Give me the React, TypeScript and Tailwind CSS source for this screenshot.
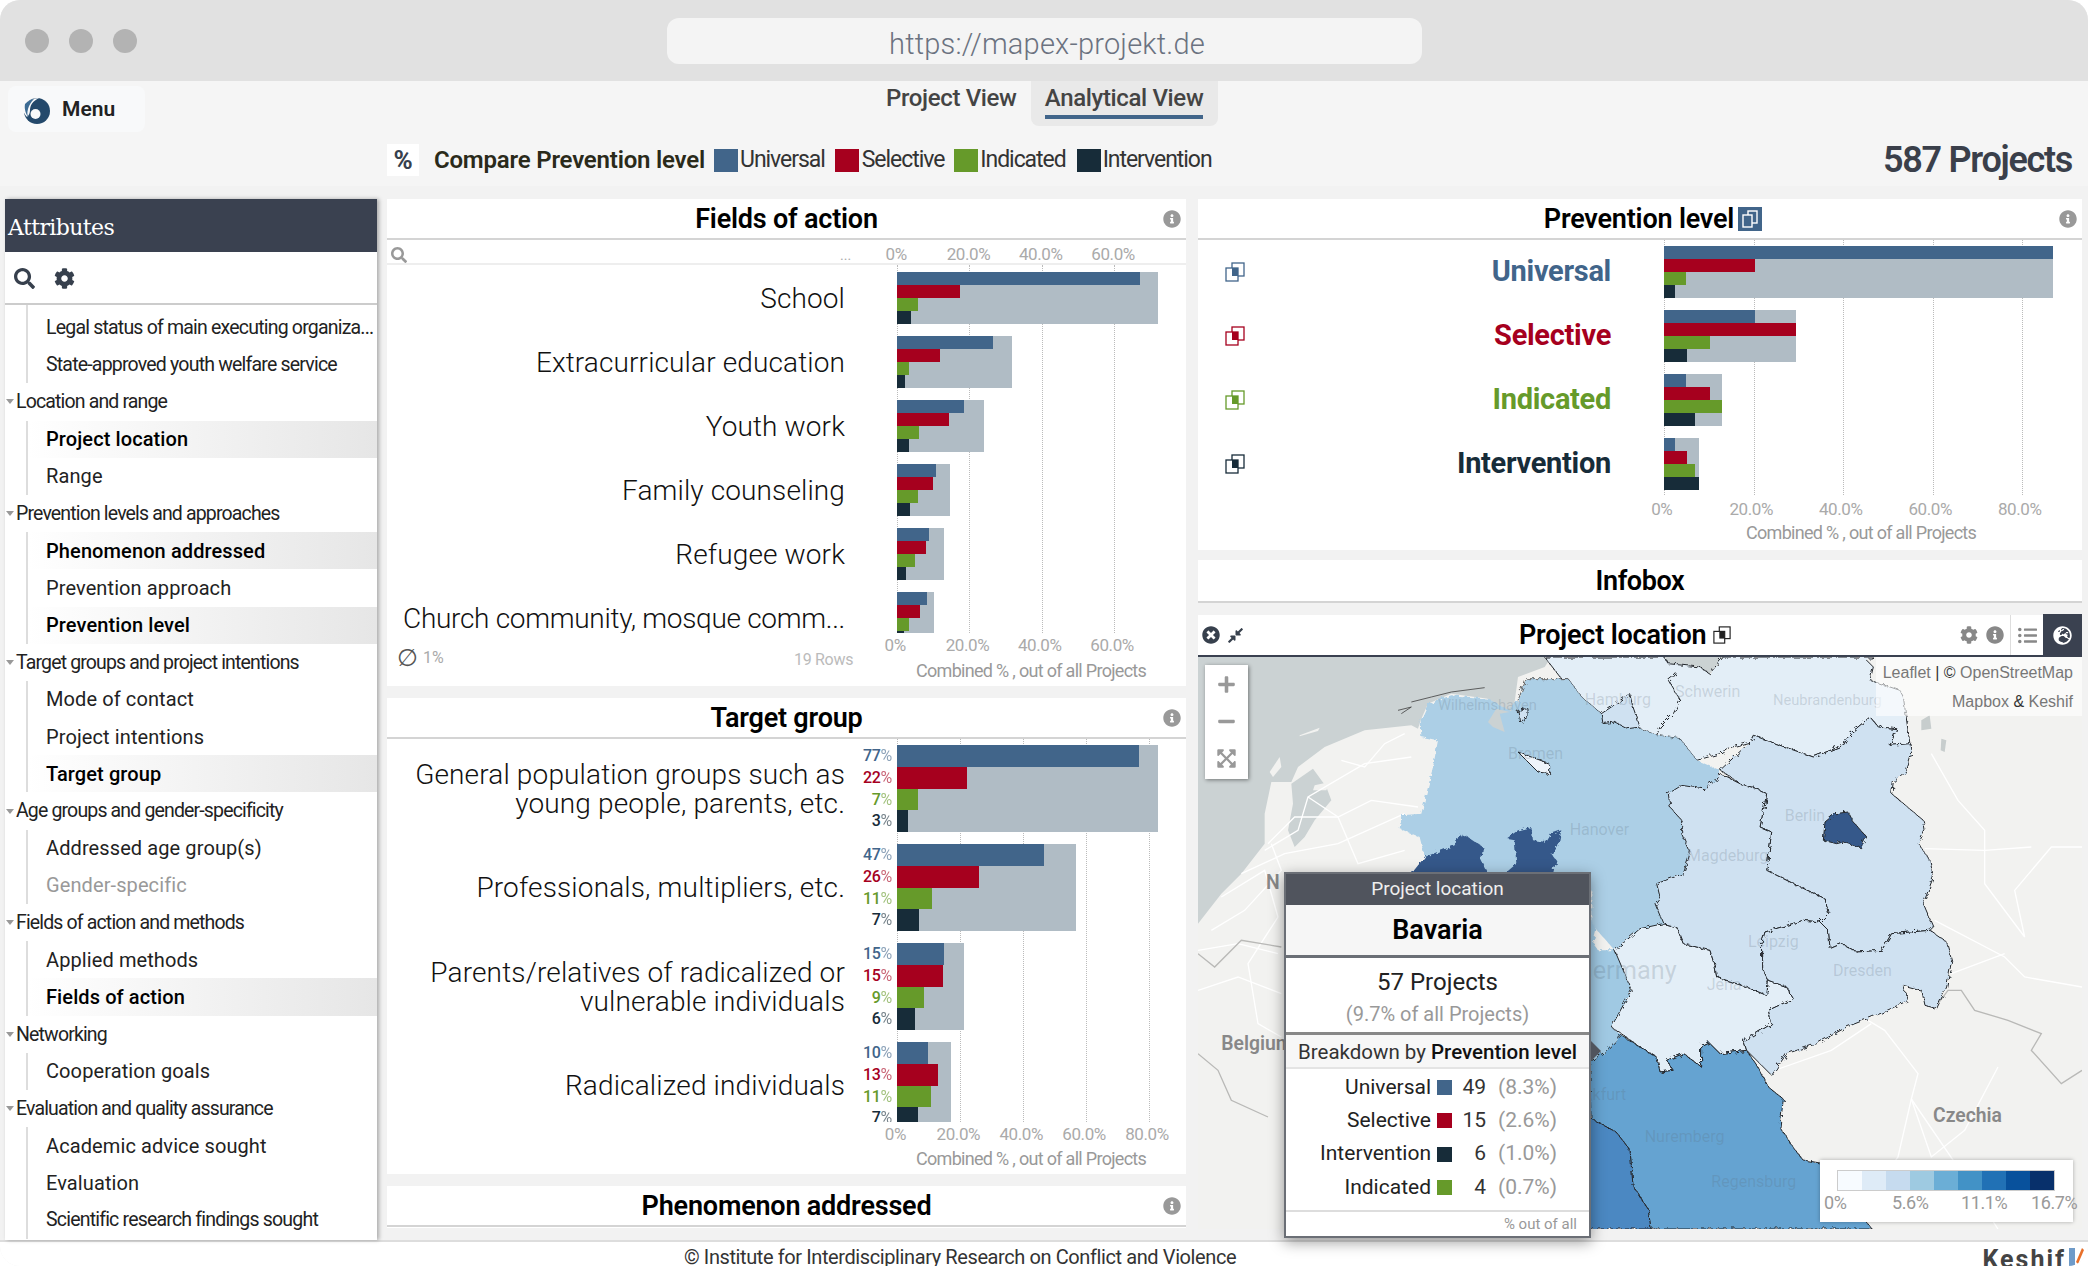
import type { ReactNode } from 'react'
import {
  FaCog,
  FaCompressAlt,
  FaExpandArrowsAlt,
  FaGlobeEurope,
  FaInfoCircle,
  FaListUl,
  FaMinus,
  FaPlus,
  FaSearch,
  FaTimesCircle,
} from 'react-icons/fa'

const BLUE = '#41658a'
const RED = '#a6001e'
const GREEN = '#669a2a'
const DARK = '#172c39'
const COLORS = [BLUE, RED, GREEN, DARK]

type Row = { label: ReactNode; total: number; bars: number[]; pct?: string[] }

const fieldRows: Row[] = [
  { label: 'School', total: 261, bars: [243, 63, 21, 14] },
  { label: 'Extracurricular education', total: 115, bars: [96, 43, 12, 8] },
  { label: 'Youth work', total: 87, bars: [67, 52, 22, 12] },
  { label: 'Family counseling', total: 53, bars: [39, 36, 21, 13] },
  { label: 'Refugee work', total: 47, bars: [32, 29, 18, 9] },
  { label: <span className="tracking-[-0.3px]">Church community, mosque comm...</span>, total: 37, bars: [30, 23, 12, 7] },
]

const targetRows: Row[] = [
  {
    label: <>General population groups such as<br />young people, parents, etc.</>,
    total: 261,
    bars: [242, 70, 21, 11],
    pct: ['77', '22', '7', '3'],
  },
  { label: 'Professionals, multipliers, etc.', total: 179, bars: [147, 82, 35, 22], pct: ['47', '26', '11', '7'] },
  {
    label: <>Parents/relatives of radicalized or<br />vulnerable individuals</>,
    total: 67,
    bars: [47, 46, 27, 18],
    pct: ['15', '15', '9', '6'],
  },
  { label: 'Radicalized individuals', total: 54, bars: [31, 41, 34, 21], pct: ['10', '13', '11', '7'] },
]

const levelRows = [
  { label: 'Universal', color: BLUE, total: 389, bars: [389, 91, 22, 11] },
  { label: 'Selective', color: RED, total: 132, bars: [91, 132, 46, 23] },
  { label: 'Indicated', color: GREEN, total: 58, bars: [22, 46, 58, 31] },
  { label: 'Intervention', color: DARK, total: 35, bars: [11, 23, 31, 35] },
]

type Item = { name: string; on?: boolean; off?: boolean; narrow?: boolean }

const sidebar: { group?: string; items: Item[] }[] = [
  {
    items: [
      { name: 'Legal status of main executing organiza...', narrow: true },
      { name: 'State-approved youth welfare service', narrow: true },
    ],
  },
  { group: 'Location and range', items: [{ name: 'Project location', on: true }, { name: 'Range' }] },
  {
    group: 'Prevention levels and approaches',
    items: [{ name: 'Phenomenon addressed', on: true }, { name: 'Prevention approach' }, { name: 'Prevention level', on: true }],
  },
  {
    group: 'Target groups and project intentions',
    items: [{ name: 'Mode of contact' }, { name: 'Project intentions' }, { name: 'Target group', on: true }],
  },
  { group: 'Age groups and gender-specificity', items: [{ name: 'Addressed age group(s)' }, { name: 'Gender-specific', off: true }] },
  { group: 'Fields of action and methods', items: [{ name: 'Applied methods' }, { name: 'Fields of action', on: true }] },
  { group: 'Networking', items: [{ name: 'Cooperation goals' }] },
  {
    group: 'Evaluation and quality assurance',
    items: [{ name: 'Academic advice sought' }, { name: 'Evaluation' }, { name: 'Scientific research findings sought', narrow: true }],
  },
]

const breakdown = [
  { label: 'Universal', color: BLUE, n: 49, pct: '8.3' },
  { label: 'Selective', color: RED, n: 15, pct: '2.6' },
  { label: 'Intervention', color: DARK, n: 6, pct: '1.0' },
  { label: 'Indicated', color: GREEN, n: 4, pct: '0.7' },
]

const legendColors = ['#f7fbff', '#deebf7', '#c6dbef', '#9ecae1', '#6baed6', '#4292c6', '#2171b5', '#08519c', '#08306b']

function DoubleSquare({ color, fill = 'none', size = 20 }: { color: string; fill?: string; size?: number }) {
  return (
    <svg width={size} height={size} viewBox="0 0 20 20" fill="none">
      <rect x="7" y="1" width="12" height="13" fill="white" stroke={color} strokeWidth="1.3" />
      <rect x="1" y="6" width="12" height="13" fill="white" stroke={color} strokeWidth="1.3" />
      <rect x="7" y="6" width="6" height="8" fill={fill} />
    </svg>
  )
}

function Axis({ ticks, step, left }: { ticks: string[]; step: number; left: number }) {
  return (
    <div className="flex text-[17px] tracking-[-0.4px] text-[#aaa]" style={{ paddingLeft: left }}>
      {ticks.map(t => (
        <span key={t} className="shrink-0 text-center" style={{ width: step }}>{t}</span>
      ))}
    </div>
  )
}

function GridLines({ step, count, start }: { step: number; count: number; start: number }) {
  return (
    <>
      {Array.from({ length: count }).map((_, i) => (
        <div
          key={i}
          className="absolute top-0 bottom-0 border-l border-dotted border-[#bbb]"
          style={{ left: start + i * step }}
        />
      ))}
    </>
  )
}

function Bars({ row, height }: { row: { total: number; bars: number[] }; height: number }) {
  return (
    <div className="relative bg-[#b0bcc5]" style={{ width: row.total }}>
      {row.bars.map((w, i) => (
        <div key={i} style={{ width: w, height, backgroundColor: COLORS[i] }} />
      ))}
    </div>
  )
}

function PanelHeader({ title, children }: { title: string; children?: ReactNode }) {
  return (
    <div className="relative flex h-[41px] shrink-0 items-center justify-center border-b-2 border-[#d4d4d4] bg-white pt-[1px]">
      <span className="text-[27px] font-semibold tracking-[-0.2px] text-black">{title}</span>
      {children}
      <FaInfoCircle className="absolute right-[5px] top-[11px] text-[18px] text-[#999]" />
    </div>
  )
}

function Sidebar() {
  return (
    <aside className="relative z-10 flex w-[372px] shrink-0 flex-col bg-white shadow-[2px_0_4px_rgba(0,0,0,0.3)]">
      <div className="flex h-[53px] items-center bg-[#3a4150] pl-[3px] pt-[3px] font-['DejaVu_Serif',serif] text-[22px] tracking-[-0.6px] text-white">
        Attributes
      </div>
      <div className="flex h-[53px] items-center gap-[19px] border-b-2 border-[#ccc] pl-[9px] pt-[2px] text-[#37404d]">
        <FaSearch className="text-[21px]" />
        <FaCog className="text-[21px]" />
      </div>
      <div className="flex-1 overflow-hidden">
        {sidebar.map((sec, i) => (
          <div key={i}>
            {sec.group && (
              <div className="flex h-[37.2px] items-center text-[19.5px] tracking-[-0.85px] text-[#222]">
                <svg width="11" height="7" viewBox="0 0 11 7">
                  <path d="M1 1h8L5 6z" fill="#999" />
                </svg>
                {sec.group}
              </div>
            )}
            <div className={`ml-[21px] border-l-2 border-[#ddd] ${i === 0 ? 'pt-[4px]' : ''}`}>
              {sec.items.map(item => (
                <div
                  key={item.name}
                  className={`flex h-[37.2px] items-center whitespace-nowrap pl-[18px] ${
                    item.narrow ? 'text-[19.5px] tracking-[-0.8px]' : 'text-[20px] tracking-[0.1px]'
                  } ${item.on ? 'bg-linear-to-r from-white to-[#e6e6e6] font-medium text-black' : item.off ? 'text-[#999]' : 'text-[#222]'}`}
                >
                  {item.name}
                </div>
              ))}
            </div>
          </div>
        ))}
      </div>
    </aside>
  )
}

function FieldsPanel() {
  return (
    <section className="flex h-[487px] shrink-0 flex-col bg-white">
      <PanelHeader title="Fields of action" />
      <div className="flex h-[25px] shrink-0 items-center border-b-2 border-[#eee] pt-[6px] text-[#aaa]">
        <FaSearch className="ml-[4px] text-[16px] text-[#999]" />
        <span className="ml-[433px] w-[20px] text-[14px] leading-none">...</span>
        <Axis ticks={['0%', '20.0%', '40.0%', '60.0%']} step={72.3} left={0} />
      </div>
      <div className="relative h-[368px] shrink-0 overflow-hidden pt-[7px]">
        <GridLines step={72.3} count={4} start={510} />
        {fieldRows.map((row, i) => (
          <div key={i} className="relative mb-[12px] flex h-[52px] items-center">
            <div className="w-[458px] shrink-0 whitespace-nowrap pt-[2px] text-right text-[28px] font-light leading-[28px] tracking-[0.12px] text-[#111]">{row.label}</div>
            <div className="ml-[52px]"><Bars row={row} height={13} /></div>
          </div>
        ))}
      </div>
      <div className="relative flex-1">
        <div className="pl-[472px]"><Axis ticks={['0%', '20.0%', '40.0%', '60.0%']} step={72.3} left={0} /></div>
        <div className="pl-[529px] text-[18px] leading-[24px] tracking-[-0.7px] text-[#999]">Combined % , out of all Projects</div>
        <div className="absolute left-[10px] top-[13px] flex items-center gap-[5px] text-[16px] text-[#aaa]">
          <span className="font-['DejaVu_Sans',sans-serif] text-[24px] leading-none text-[#555]">∅</span>1%
        </div>
        <div className="absolute left-[407px] top-[15px] text-[16px] tracking-[-0.3px] text-[#bbb]">19 Rows</div>
      </div>
    </section>
  )
}

function TargetPanel() {
  return (
    <section className="flex h-[476px] shrink-0 flex-col bg-white">
      <PanelHeader title="Target group" />
      <div className="relative h-[383px] shrink-0 overflow-hidden pt-[6px]">
        <GridLines step={62.9} count={5} start={510} />
        {targetRows.map((row, i) => (
          <div key={i} className="relative mb-[12px] flex h-[87px] items-center">
            <div className="w-[458px] shrink-0 text-right text-[28px] font-light leading-[29px] tracking-[0.15px] text-[#111]">{row.label}</div>
            <div className="ml-[7px] w-[40px] shrink-0 text-right text-[16px] leading-[21.75px] tracking-[-0.3px]">
              {(row.pct ?? []).map((p, j) => (
                <div key={j} className="font-medium" style={{ color: COLORS[j] }}>
                  {p}<span className="font-normal opacity-60">%</span>
                </div>
              ))}
            </div>
            <div className="ml-[5px]"><Bars row={row} height={21.75} /></div>
          </div>
        ))}
      </div>
      <div className="pl-[477px]"><Axis ticks={['0%', '20.0%', '40.0%', '60.0%', '80.0%']} step={62.9} left={0} /></div>
      <div className="pl-[529px] text-[18px] leading-[22px] tracking-[-0.7px] text-[#999]">Combined % , out of all Projects</div>
    </section>
  )
}

function LevelPanel() {
  return (
    <section className="flex h-[351px] shrink-0 flex-col bg-white">
      <PanelHeader title="Prevention level">
        <span className="ml-[4px] mr-[-26px] flex h-[24px] w-[24px] items-center justify-center bg-[#41658a]">
          <svg width="16" height="18" viewBox="0 0 16 18" fill="none">
            <rect x="6" y="1" width="9" height="12" stroke="#fff" strokeWidth="1.4" />
            <rect x="1" y="5" width="9" height="12" fill="#41658a" stroke="#fff" strokeWidth="1.4" />
          </svg>
        </span>
      </PanelHeader>
      <div className="relative h-[255px] shrink-0 pt-[6px]">
        <GridLines step={89.5} count={5} start={466} />
        {levelRows.map(row => (
          <div key={row.label} className="relative mb-[12px] flex h-[52px] items-center">
            <div className="ml-[27px] shrink-0"><DoubleSquare color={row.color} fill={row.color} /></div>
            <div
              className="w-[366px] shrink-0 text-right text-[29px] font-bold tracking-[-0.3px]"
              style={{ color: row.color }}
            >
              {row.label}
            </div>
            <div className="ml-[53px]"><Bars row={row} height={13} /></div>
          </div>
        ))}
      </div>
      <div className="pt-[2px]"><Axis ticks={['0%', '20.0%', '40.0%', '60.0%', '80.0%']} step={89.5} left={419} /></div>
      <div className="pl-[548px] text-[18px] leading-[20px] tracking-[-0.7px] text-[#999]">Combined % , out of all Projects</div>
    </section>
  )
}

function MapDrawing() {
  const seaPts = '0,0 1060,0 1040,30 960,60 945,170 870,125 760,110 690,140 668,190 660,215 640,205 500,220 380,270 300,330 280,375 220,375 200,470 200,560 130,650 70,710 0,800'
  return (
    <svg viewBox="0 0 2652 1716" className="absolute inset-0 h-full w-full">
      <defs>
        <filter id="rough" x="-5%" y="-5%" width="110%" height="110%">
          <feTurbulence type="fractalNoise" baseFrequency="0.07" numOctaves="3" seed="4" />
          <feDisplacementMap in="SourceGraphic" scale="18" />
        </filter>
      </defs>
      <rect width="2652" height="1716" fill="#f2f2f0" />
      <polygon points={seaPts} fill="#cbd2d3" />
      <polygon points="280,380 345,335 385,390 400,430 350,490 320,540 290,570 270,520 285,440" fill="#cbd2d3" />
      <polygon points="215,345 245,300 250,330 225,360" fill="#f2f2f0" />
      <polygon points="305,235 365,212 360,222 305,238" fill="#f2f2f0" />
      <polygon points="350,385 395,375 385,400 345,400" fill="#f2f2f0" />
      <polygon points="1400,0 1410,20 1505,30 1535,50 1570,10 1576,0" fill="#cbd2d3" />
      <polygon points="2170,190 2195,175 2200,215 2170,220" fill="#c7cdcd" />
      <polygon points="2230,245 2245,250 2240,285 2228,280" fill="#c7cdcd" />
      <g fill="none" stroke="#fff" strokeWidth="4">
        <polyline points="200,580 300,520 330,420 500,320 640,300" />
        <polyline points="210,560 290,480 420,480 520,430 660,450" />
        <polyline points="130,650 260,590 420,560 620,470" />
        <polyline points="70,720 200,640 240,780 150,920 180,1100 250,1140" />
        <polyline points="0,880 120,860 240,890" />
        <polyline points="430,310 500,330 560,260 620,230" />
        <polyline points="220,560 250,640 140,760 40,820" />
        <polyline points="330,420 420,480 480,620 620,580" />
        <polyline points="0,1000 120,960 250,1010" />
        <polyline points="2200,290 2280,430 2360,520 2360,680 2480,840 2450,700 2560,570 2652,570" />
        <polyline points="2180,575 2360,580 2500,570" />
        <polyline points="2210,790 2420,900 2480,960 2652,990" />
        <polyline points="2260,950 2420,890" />
        <polyline points="1960,1060 2060,1120 2160,1250 2140,1326 2200,1500 2300,1420 2400,1230" />
        <polyline points="1730,1240 1900,1180 2020,1100" />
        <polyline points="2140,1326 2100,1500 1950,1716" />
        <polyline points="2140,1326 2300,1560 2400,1716" />
      </g>
      <g fill="none" stroke="#b9b9b7" strokeWidth="4">
        <polyline points="2220,1040 2250,1000 2290,1000 2330,1060 2430,1090 2530,1130 2500,1180 2590,1280 2652,1240" />
        <polyline points="0,890 50,930 130,850 250,870" />
        <polyline points="0,1190 60,1240 100,1330 210,1380" />
      </g>
      <g filter="url(#rough)" stroke="#23272c" strokeWidth="3" strokeLinejoin="round">
        <polygon
          fill="#e3eef7"
          points="1040,0 1090,65 1110,65 1150,120 1210,170 1300,210 1326,215 1376,235 1446,245 1496,310 1566,290 1586,275 1656,255 1666,235 1746,265 1846,300 1936,265 1956,230 2016,180 2041,210 2096,215 2076,265 2136,262 2116,120 2106,100 2016,70 2026,30 2006,10 2026,0 1576,0 1535,50 1505,30 1410,20 1400,0"
        />
        <polyline fill="none" points="1436,50 1411,70 1446,130 1426,170 1386,210 1376,235" />
        <polygon
          fill="#accfe6"
          stroke="none"
          points="670,240 668,190 690,140 760,115 870,125 935,160 960,130 985,65 1050,65 1110,65 1150,120 1210,170 1300,210 1326,215 1376,235 1446,245 1496,310 1566,340 1556,370 1516,395 1451,385 1411,410 1416,450 1451,490 1451,530 1476,590 1456,650 1376,680 1386,720 1376,740 1396,800 1326,815 1250,880 1180,800 1180,700 850,700 680,650 680,600 665,540 605,515 610,475 670,470 685,410 705,330 720,250"
        />
        <polyline fill="none" points="960,130 985,65 1050,65 1110,65" stroke="#666" />
        <polygon fill="#a0c9e3" stroke="none" points="1175,780 1195,820 1185,860 1200,880 1250,880 1280,950 1300,1000 1240,1110 1270,1135 1220,1185 1175,1215 1100,1215 1100,780" />
        <polygon fill="#cfe1f1" points="1210,170 1240,150 1260,135 1295,110 1305,150 1326,210 1290,215 1250,195 1215,200" />
        <polygon fill="#e3eef7" points="1326,815 1396,800 1436,810 1456,860 1536,880 1551,930 1556,960 1646,990 1706,1015 1711,970 1766,990 1786,1025 1711,1060 1721,1100 1666,1135 1636,1150 1646,1180 1566,1190 1531,1155 1511,1165 1511,1230 1456,1190 1406,1210 1426,1240 1386,1245 1376,1200 1326,1170 1270,1130 1240,1110 1300,1000 1280,950 1250,880" />
        <polygon fill="#65a3d1" points="1270,1135 1326,1170 1376,1200 1386,1245 1426,1240 1406,1210 1456,1190 1511,1230 1511,1165 1531,1155 1566,1190 1646,1180 1680,1230 1711,1290 1756,1326 1746,1410 1776,1458 1815,1509 1866,1518 2022,1716 1359,1716 1350,1656 1305,1587 1296,1479 1254,1425 1179,1385 1175,1215 1220,1185" />
        <polygon fill="#4c88c2" points="1100,1300 1179,1385 1254,1425 1296,1479 1305,1587 1350,1656 1359,1716 1100,1716" />
        <g transform="translate(1326 0)">
          <polygon fill="#cfe1f1" points="240,340 330,255 340,235 420,265 520,300 610,265 630,230 690,180 715,210 770,215 750,265 810,260 815,290 800,340 760,375 755,410 850,490 855,520 835,560 870,610 880,660 850,740 880,810 870,820 755,830 725,880 650,885 605,860 570,875 565,820 540,795 565,770 555,725 460,680 380,640 385,600 395,525 360,510 380,410 350,395 300,380 250,345" />
          <polygon fill="#cfe1f1" points="240,350 300,380 350,395 380,410 360,510 395,525 385,600 380,640 460,680 555,725 565,770 540,795 490,790 375,825 365,860 365,930 385,970 380,1015 320,990 230,960 225,930 210,880 130,860 110,810 70,800 45,740 60,720 50,680 130,650 150,590 125,530 125,490 90,450 85,410 125,385 190,395 230,370" />
          <polygon fill="#cfe1f1" points="375,825 490,790 540,795 565,820 570,875 605,860 650,885 725,880 755,830 870,820 920,855 935,910 920,990 890,1055 855,1045 845,1000 790,985 805,1030 720,1070 620,1110 530,1160 440,1190 395,1255 360,1220 320,1180 310,1150 340,1135 395,1100 385,1060 460,1025 440,990 385,970 365,930 365,860" />
          <polygon fill="#36598a" points="550,550 555,495 585,470 625,465 640,495 680,540 662,572 610,555 590,560" />
        </g>
        <polygon fill="#eef4fa" points="960,285 1000,300 1055,320 1055,350 1020,345 985,310" />
        <polygon fill="#cfe1f1" points="960,160 990,155 990,180 965,195" />
        <polygon fill="#36598a" stroke="none" points="640,650 680,600 770,565 785,530 810,540 855,570 850,610 870,650" />
        <polygon fill="#36598a" stroke="none" points="920,650 955,620 950,550 925,545 960,520 1000,510 1005,550 1045,555 1060,530 1090,520 1080,570 1060,590 1075,610 1065,650" />
      </g>
      <polygon fill="#cbd2d3" points="870,195 895,155 935,165 905,170 920,225 885,210" />
      <g fill="none" stroke="#444" strokeWidth="2.5">
        <polyline points="600,160 640,150 610,170" />
        <polyline points="640,135 700,120 760,105 860,92" />
      </g>
      <g fontFamily="Roboto, sans-serif" fontWeight="400" fontSize="48" fill="#5b6b7a" fillOpacity="0.22">
        <text x="720" y="158" fontSize="44">Wilhelmshaven</text>
        <text x="1160" y="145">Hamburg</text>
        <text x="1431" y="120">Schwerin</text>
        <text x="1725" y="145" fontSize="44">Neubrandenburg</text>
        <text x="930" y="305">Bremen</text>
        <text x="1115" y="535">Hanover</text>
        <text x="1467" y="612">Magdeburg</text>
        <text x="1760" y="492">Berlin</text>
        <text x="1650" y="870">Leipzig</text>
        <text x="1905" y="958">Dresden</text>
        <text x="1526" y="1000">Jena</text>
        <text x="1436" y="965" fontSize="76" textAnchor="end">Germany</text>
        <text x="1340" y="1455">Nuremberg</text>
        <text x="1540" y="1590">Regensburg</text>
        <text x="1090" y="1330">Frankfurt</text>
      </g>
      <g fontFamily="Roboto, sans-serif" fontWeight="600" fill="#888">
        <text x="204" y="695" fontSize="58">N</text>
        <text x="70" y="1180" fontSize="58">Belgium</text>
        <text x="2205" y="1395" fontSize="58">Czechia</text>
      </g>
    </svg>
  )
}

function MapTooltip() {
  return (
    <div className="absolute left-[86px] top-[215px] z-20 flex h-[366px] w-[307px] flex-col border-2 border-[#6b6f76] bg-white shadow-[0_4px_14px_rgba(0,0,0,0.4)]">
      <div className="flex h-[31px] shrink-0 items-center justify-center bg-[#50545d] text-[19px] text-[#eee]">Project location</div>
      <div className="flex h-[53px] shrink-0 items-center justify-center border-b-[3px] border-[#6b6f76] bg-[#f6f6f6] text-[27px] font-semibold text-black">
        Bavaria
      </div>
      <div className="flex h-[77px] shrink-0 flex-col items-center border-b-[3px] border-[#888] pt-[7px]">
        <div className="text-[24px] leading-[34px] text-[#222]">57 Projects</div>
        <div className="text-[20px] leading-[30px] text-[#999]">(9.7% of all Projects)</div>
      </div>
      <div className="relative flex h-[34px] shrink-0 items-center justify-center border-b-2 border-[#e4e4e4] bg-[#f7f7f7] pt-[2px] text-[20.5px] text-[#333]">
        Breakdown by&nbsp;<span className="font-medium text-[#111]">Prevention level</span>
        <span className="absolute -right-[12px] top-[6px] h-0 w-0 border-y-[10px] border-l-[10px] border-y-transparent border-l-[#50545d]" />
      </div>
      <div className="flex-1 pt-[2px]">
        {breakdown.map(b => (
          <div key={b.label} className="flex h-[33.3px] items-center text-[21px]">
            <span className="w-[145px] shrink-0 text-right text-[#222]">{b.label}</span>
            <span className="ml-[6px] h-[15px] w-[15px] shrink-0" style={{ backgroundColor: b.color }} />
            <span className="w-[34px] shrink-0 text-right text-[#333]">{b.n}</span>
            <span className="w-[71px] shrink-0 text-right text-[#999]">({b.pct}%)</span>
          </div>
        ))}
      </div>
      <div className="flex h-[26px] shrink-0 items-center justify-end border-t-2 border-[#ddd] pr-[12px] text-[15px] text-[#999]">% out of all</div>
    </div>
  )
}

function LocationPanel() {
  return (
    <section className="flex flex-1 flex-col">
      <div className="flex h-[42px] shrink-0 items-center border-b-2 border-[#3a4150] bg-white pl-[4px]">
        <FaTimesCircle className="text-[18px] text-[#37404d]" />
        <FaCompressAlt className="ml-[7px] text-[17px] text-[#37404d]" />
        <span className="ml-[275px] text-[27px] font-semibold tracking-[-0.2px] text-black">Project location</span>
        <span className="ml-[7px]"><DoubleSquare color="#222" fill="#222" size={18} /></span>
        <div className="ml-auto flex h-full items-center text-[#888]">
          <FaCog className="text-[18px]" />
          <FaInfoCircle className="ml-[8px] text-[18px]" />
          <span className="ml-[6px] flex h-full w-[33px] items-center justify-center border-l border-[#ddd] text-[#888]"><FaListUl className="text-[19px]" /></span>
          <span className="flex h-[42px] w-[39px] items-center justify-center bg-[#3a4150] text-white"><FaGlobeEurope className="text-[19px]" /></span>
        </div>
      </div>
      <div className="relative h-[572px] shrink-0">
        <div className="absolute inset-0 overflow-hidden"><MapDrawing /></div>
        <div className="absolute left-[7px] top-[8px] flex h-[114px] w-[43px] flex-col items-center justify-between bg-white py-[10px] text-[#999] shadow-[1px_1px_4px_rgba(0,0,0,0.45)]">
          <FaPlus className="text-[19px]" />
          <FaMinus className="text-[19px]" />
          <FaExpandArrowsAlt className="text-[21px]" />
        </div>
        <div className="absolute right-0 top-0 flex h-[59px] w-[206px] flex-col items-end justify-center bg-white/60 pr-[9px] font-['Liberation_Sans',sans-serif] text-[16px] leading-[29px] text-[#777]">
          <div>Leaflet <span className="text-[#333]">|</span> <span className="text-[#333]">©</span> OpenStreetMap</div>
          <div>Mapbox <span className="text-[#333]">&amp;</span> Keshif</div>
        </div>
        <div className="absolute left-[622px] top-[503px] h-[62px] w-[253px] bg-white pl-[17px] pt-[10px] shadow-[0_0_4px_rgba(0,0,0,0.3)]">
          <div className="flex h-[21px] w-[218px] border border-[#ccc]">
            {legendColors.map(c => (
              <div key={c} className="flex-1" style={{ backgroundColor: c }} />
            ))}
          </div>
          <div className="-ml-[13px] mt-[1px] flex whitespace-nowrap text-[18px] leading-[22px] tracking-[-0.4px] text-[#999]">
            <span className="w-[68px] shrink-0">0%</span>
            <span className="w-[69px] shrink-0">5.6%</span>
            <span className="w-[70px] shrink-0">11.1%</span>
            <span className="shrink-0">16.7%</span>
          </div>
        </div>
        <MapTooltip />
      </div>
    </section>
  )
}

export default function App() {
  return (
    <div className="flex h-screen w-full flex-col overflow-hidden rounded-[20px] bg-[#f2f2f2] font-['Roboto',sans-serif]">
      {/* Browser chrome */}
      <div className="flex h-[81px] shrink-0 items-center bg-[#e1e1e1]">
        <div className="ml-[25px] flex gap-[20px]">
          <span className="h-[24px] w-[24px] rounded-full bg-[#b3b3b3]" />
          <span className="h-[24px] w-[24px] rounded-full bg-[#b3b3b3]" />
          <span className="h-[24px] w-[24px] rounded-full bg-[#b3b3b3]" />
        </div>
        <div className="ml-[530px] flex h-[46px] w-[755px] items-center justify-center rounded-[12px] bg-[#f4f4f4] pl-[5px] pt-[8px] text-[29px] font-light tracking-[0.2px] text-[#6b7280]">
          https://mapex-projekt.de
        </div>
      </div>

      {/* Nav rows */}
      <div className="h-[105px] shrink-0 bg-[#f5f5f5]">
        <div className="flex h-[45px] items-start">
          <div className="ml-[8px] mt-[5px] flex h-[46px] w-[137px] items-center rounded-[8px] bg-[#f8f9fa] pl-[14px] pt-[1px]">
            <svg width="28" height="30" viewBox="0 0 28 30">
              <circle cx="15" cy="16" r="13" fill="#24496b" />
              <path d="M1 13C4 6 11 3 17 3 11 6 8 10 8 15c0 3-1 5-3 7-3-3-4-6-4-9z" fill="#f8f9fa" />
              <path d="M3 9c3-3 6-5 9-5-3 3-5 6-6 10-1 4-1 6 1 9-3-3-5-9-4-14z" fill="#3d6c94" />
              <circle cx="13.5" cy="19" r="5" fill="#f8f9fa" />
            </svg>
            <span className="ml-[12px] text-[21px] font-semibold text-[#222]">Menu</span>
          </div>
          <span className="ml-[741px] text-[24px] font-medium leading-[34px] tracking-[-0.35px] text-[#444]">Project View</span>
          <div className="ml-[14px] flex h-[45px] w-[187px] flex-col items-center rounded-b-[8px] bg-[#e9e9e9]">
            <span className="text-[24px] font-medium leading-[34px] tracking-[-0.35px] text-[#444]">Analytical View</span>
            <span className="h-[4px] w-[158px] bg-[#41658a]" />
          </div>
        </div>
        <div className="mt-[18px] flex h-[32px] items-center pl-[387px]">
          <span className="flex h-[32px] w-[32px] items-center justify-center bg-white text-[26px] font-bold text-[#37404d]">%</span>
          <span className="ml-[15px] text-[24px] font-semibold tracking-[-0.2px] text-[#2a2a1a]">Compare Prevention level</span>
          <span className="ml-[9px] h-[23px] w-[24px] bg-[#41658a]" />
          <span className="ml-[2px] pt-[1px] text-[23px] tracking-[-1.05px] text-[#333]">Universal</span>
          <span className="ml-[10px] h-[23px] w-[24px] bg-[#a6001e]" />
          <span className="ml-[3px] pt-[1px] text-[23px] tracking-[-1.05px] text-[#333]">Selective</span>
          <span className="ml-[10px] h-[23px] w-[24px] bg-[#669a2a]" />
          <span className="ml-[2px] pt-[1px] text-[23px] tracking-[-1.05px] text-[#333]">Indicated</span>
          <span className="ml-[11px] h-[23px] w-[24px] bg-[#172c39]" />
          <span className="ml-[2px] pt-[1px] text-[23px] tracking-[-1.05px] text-[#333]">Intervention</span>
          <span className="ml-auto pr-[16px] text-[36px] font-semibold tracking-[-1.3px] text-[#3a3f4a]">587 Projects</span>
        </div>
      </div>

      {/* Dashboard */}
      <div className="flex min-h-0 flex-1 pl-[5px] pt-[13px]">
        <Sidebar />
        <div className="ml-[10px] flex w-[799px] shrink-0 flex-col gap-[12px] overflow-hidden">
          <FieldsPanel />
          <TargetPanel />
          <section className="flex h-[42px] shrink-0 flex-col bg-white">
            <PanelHeader title="Phenomenon addressed" />
          </section>
        </div>
        <div className="ml-[12px] flex w-[884px] shrink-0 flex-col">
          <LevelPanel />
          <div className="mt-[10px] flex h-[43px] shrink-0 items-center justify-center border-b-2 border-[#d4d4d4] bg-white pt-[2px] text-[27px] font-semibold tracking-[-0.4px] text-black">
            Infobox
          </div>
          <div className="mt-[12px] flex min-h-0 flex-1"><LocationPanel /></div>
        </div>
      </div>

      {/* Footer */}
      <div className="relative h-[26px] shrink-0 overflow-hidden border-t-2 border-[#ddd] bg-white pl-[684px] pt-[3px] text-[20px] leading-[24px] tracking-[-0.4px] text-[#333]">
        © Institute for Interdisciplinary Research on Conflict and Violence
        <div className="absolute right-[4px] top-[4px] flex items-start">
          <span className="text-[25px] font-bold leading-[28px] tracking-[2px] text-[#444]">Keshif</span>
          <svg width="16" height="24" viewBox="0 0 16 24" className="ml-[2px]">
            <rect x="1" y="2" width="6" height="22" fill="#6f9bc9" />
            <path d="M8 16l6-14 2 2-6 14z" fill="#e8702a" />
          </svg>
        </div>
      </div>
    </div>
  )
}
